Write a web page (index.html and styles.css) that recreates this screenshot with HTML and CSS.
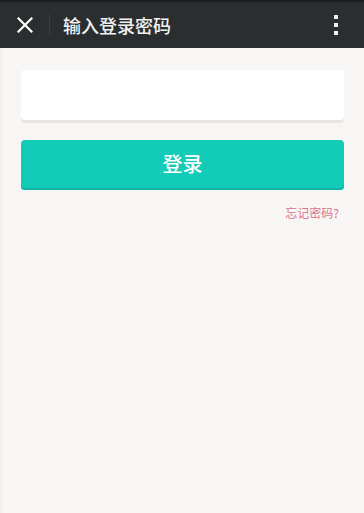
FILE: index.html
```html
<!doctype html>
<html lang="zh-CN">
    <head>
        <meta charset="UTF-8" />
        <meta name="viewport" content="width=device-width, initial-scale=1.0" />
        <title>输入登录密码</title>
        <link rel="stylesheet" href="styles.css">
    </head>
    <body>
        <div class="topBar">
            <div class="closeBtn">
                <svg width="16" height="16" viewBox="0 0 16 16">
                    <path d="M1.5 1.5 L14.5 14.5 M14.5 1.5 L1.5 14.5" stroke="#fff" stroke-width="2.2" stroke-linecap="square" fill="none" />
                </svg>
            </div>
            <div class="divider"></div>
            <h1 class="title">输入登录密码</h1>
            <div class="moreBtn">
                <span></span><span></span><span></span>
            </div>
        </div>
        <div class="content">
            <div class="inputCard">
                <input type="password" class="pwdInput" />
            </div>
            <button class="loginBtn">登录</button>
            <div class="forgot"><a href="#">忘记密码?</a></div>
        </div>
    </body>
</html>
```

FILE: styles.css
```css
html,
body {
    height: 100%;
}
body {
    margin: 0;
    font-family: "Noto Sans CJK SC", "Noto Sans", sans-serif;
    background-color: #f7f6f4;
    box-shadow: inset 2px 0 0 #f1f0ec;
}
.topBar {
    height: 48px;
    background-color: #2b2e2f;
    border-top: 2px solid #1c1e1f;
    box-sizing: border-box;
    display: flex;
    align-items: center;
    padding-left: 16px;
}
.closeBtn {
    width: 18px;
    height: 18px;
    display: flex;
    align-items: center;
    justify-content: center;
}
.divider {
    width: 1px;
    height: 22px;
    background-color: #3a3d3e;
    margin-left: 15px;
}
.title {
    margin: 0 0 0 13px;
    font-size: 18px;
    font-weight: 500;
    color: #f2f2f2;
    flex: 1;
    line-height: 1;
}
.moreBtn {
    width: 4px;
    display: flex;
    flex-direction: column;
    gap: 4px;
    margin-right: 26px;
}
.moreBtn span {
    width: 4px;
    height: 4px;
    background-color: #f2f2f2;
}
.content {
    padding: 22px 20px 0 21px;
}
.inputCard {
    height: 50px;
    background-color: #fff;
    border-radius: 4px;
    box-shadow: 0 3px 0 #e7e6e3;
}
.pwdInput {
    width: 100%;
    height: 100%;
    border: none;
    background: transparent;
    outline: none;
    padding: 0 14px;
    box-sizing: border-box;
    font-size: 16px;
}
.loginBtn {
    display: block;
    width: 100%;
    height: 50px;
    margin-top: 20px;
    padding: 0 0 4px;
    background-color: #12ccb8;
    color: #fff;
    border: none;
    border-radius: 4px;
    box-shadow: inset 0 -2px 0 #10b5a3;
    font-family: inherit;
    font-size: 20px;
    font-weight: 500;
    cursor: pointer;
}
.forgot {
    text-align: right;
    margin-top: 15px;
    padding-right: 5px;
    font-size: 12px;
    line-height: 16px;
}
.forgot a {
    color: #e0728e;
    text-decoration: none;
}
```
